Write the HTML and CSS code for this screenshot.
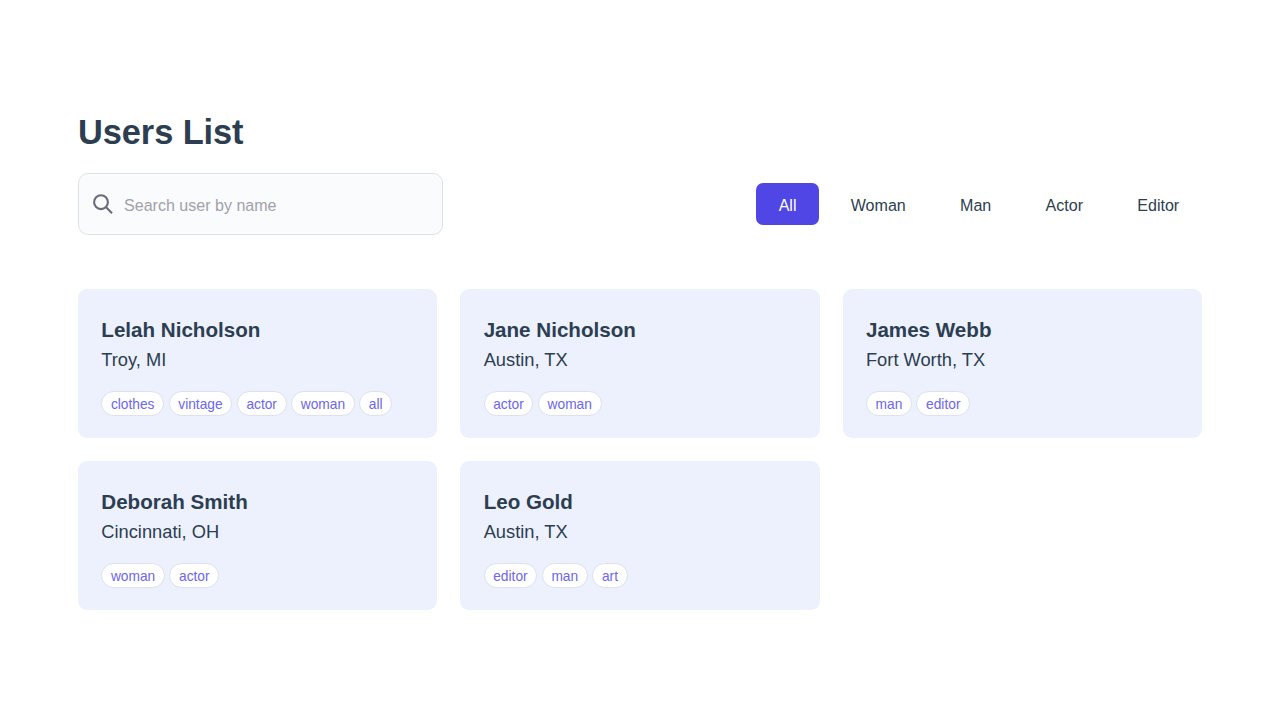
FILE: index.html
```html
<!DOCTYPE html>
<html lang="en">
<head>
<meta charset="utf-8">
<title>Users List</title>
<link rel="stylesheet" href="styles.css">
</head>
<body>
<main class="page">
  <h1 class="title">Users List</h1>
  <div class="toolbar">
    <label class="search">
      <svg class="search-icon" viewBox="0 0 22 22" fill="none" stroke="currentColor" stroke-width="2.1"><circle cx="8" cy="9.2" r="6.9"/><path d="M12.9 14 19 20.2"/></svg>
      <input class="search-input" type="text" placeholder="Search user by name">
    </label>
    <nav class="filters">
      <button class="filter active">All</button>
      <button class="filter">Woman</button>
      <button class="filter">Man</button>
      <button class="filter">Actor</button>
      <button class="filter">Editor</button>
    </nav>
  </div>
  <section class="grid">
    <article class="card"><h2 class="name">Lelah Nicholson</h2><p class="city">Troy, MI</p><div class="tags"><span class="tag">clothes</span><span class="tag">vintage</span><span class="tag">actor</span><span class="tag">woman</span><span class="tag">all</span></div></article>
    <article class="card"><h2 class="name">Jane Nicholson</h2><p class="city">Austin, TX</p><div class="tags"><span class="tag">actor</span><span class="tag">woman</span></div></article>
    <article class="card"><h2 class="name">James Webb</h2><p class="city">Fort Worth, TX</p><div class="tags"><span class="tag">man</span><span class="tag">editor</span></div></article>
    <article class="card"><h2 class="name">Deborah Smith</h2><p class="city">Cincinnati, OH</p><div class="tags"><span class="tag">woman</span><span class="tag">actor</span></div></article>
    <article class="card"><h2 class="name">Leo Gold</h2><p class="city">Austin, TX</p><div class="tags"><span class="tag">editor</span><span class="tag">man</span><span class="tag">art</span></div></article>
  </section>
</main>
</body>
</html>
```
FILE: styles.css
```css
* { box-sizing: border-box; }
body {
  margin: 0;
  background: #fff;
  color: #2c3e50;
  font-family: "Liberation Sans", Arial, sans-serif;
}
.page { width: 1124px; margin: 0 auto; padding-top: 112px; }
.title { margin: 0; font-size: 34.4px; line-height: 41px; font-weight: 700; letter-spacing: -0.08px; }
.toolbar {
  display: flex;
  align-items: center;
  justify-content: space-between;
  margin-top: 20px;
}
.search {
  display: flex;
  align-items: center;
  width: 365px;
  height: 62px;
  padding: 0 14px;
  border: 1px solid #dce3e6;
  border-radius: 10px;
  background: #f9fbfd;
  color: #6b6b7b;
}
.search-icon { width: 22px; height: 22px; flex: none; }
.search-input {
  flex: 1;
  min-width: 0;
  margin-left: 9px;
  padding: 2px 0 0;
  border: 0;
  outline: 0;
  background: transparent;
  font: 16.06px "Liberation Sans", Arial, sans-serif;
  color: #2c3e50;
}
.search-input::placeholder { color: #a1a1aa; }
.filters { display: flex; gap: 8.7px; }
.filter {
  height: 42px;
  padding: 3px 22.8px 0;
  border: 0;
  border-radius: 7px;
  background: transparent;
  color: #2c3e50;
  font: 16.06px "Liberation Sans", Arial, sans-serif;
}
.filter.active { background: #4f46e5; color: #fff; }
.grid {
  display: grid;
  grid-template-columns: repeat(3, 1fr);
  gap: 23px;
  margin-top: 54px;
}
.card {
  height: 149px;
  padding: 27px 23.3px 0;
  border-radius: 9px;
  background: #edf1fe;
}
.name { margin: 0; font-size: 20.6px; line-height: 28px; font-weight: 700; }
.city { margin: 2px 0 0; font-size: 18.3px; line-height: 28px; }
.tags { display: flex; gap: 4.6px; margin-top: 17px; }
.tag {
  height: 25px;
  padding: 2px 8.6px 0;
  border: 1px solid #dde1ea;
  border-radius: 13px;
  background: #fff;
  color: #6c66ee;
  font-size: 13.76px;
  line-height: 22px;
}
```
